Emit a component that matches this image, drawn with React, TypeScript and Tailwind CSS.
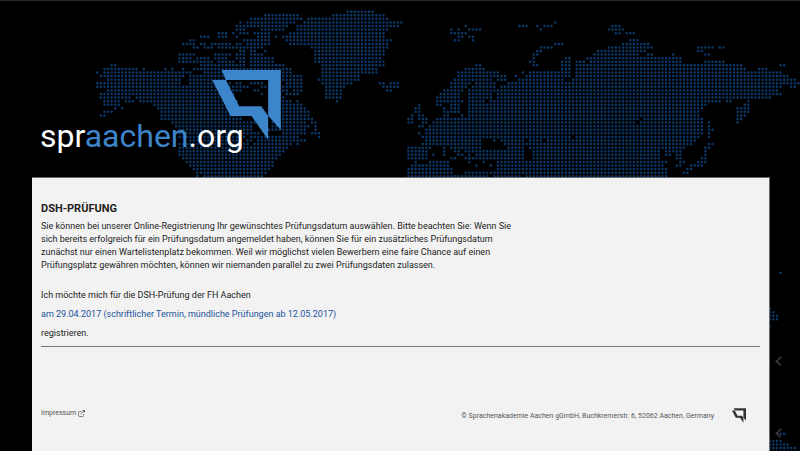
import React from "react";

const PITCH = 3.577;
const ORIGIN_X = 97.3;
const ORIGIN_Y = 10.7;

// Land spans of the dotted world map: row number -> [from, to, from, to, ...]
const LAND: Record<number, number[]> = {
  0: [347, 373],
  1: [265, 298, 333, 384],
  2: [251, 301, 308, 387],
  3: [240, 240, 247, 294, 304, 401, 555, 555],
  4: [237, 247, 251, 287, 297, 396, 465, 465, 519, 527, 537, 537, 544, 552, 612, 619],
  5: [237, 244, 262, 283, 297, 388, 451, 451, 458, 458, 469, 480, 540, 540, 608, 623],
  6: [218, 227, 233, 233, 240, 247, 254, 269, 290, 384, 451, 466, 616, 619, 627, 634],
  7: [200, 209, 218, 227, 237, 237, 258, 269, 276, 276, 283, 384, 458, 462, 469, 473],
  8: [190, 194, 243, 270, 287, 391, 455, 458, 473, 473, 630, 637],
  9: [183, 195, 200, 206, 212, 230, 237, 240, 247, 262, 265, 270, 290, 387, 555, 562, 623, 649],
  10: [194, 198, 204, 213, 218, 230, 234, 240, 243, 262, 312, 387, 540, 552, 608, 652, 698, 712, 719, 723],
  11: [240, 244, 251, 254, 265, 265, 315, 384, 537, 540, 598, 646, 698, 701],
  12: [179, 194, 215, 228, 237, 245, 251, 263, 315, 384, 533, 537, 594, 637, 647, 652, 673, 673, 705, 708],
  13: [179, 187, 190, 190, 197, 207, 215, 225, 237, 244, 251, 273, 315, 380, 533, 533, 565, 570, 587, 680],
  14: [179, 194, 198, 213, 219, 225, 230, 233, 240, 244, 251, 273, 315, 384, 530, 533, 562, 570, 576, 584, 591, 680, 705, 723],
  15: [112, 115, 201, 208, 212, 244, 251, 284, 322, 384, 476, 480, 533, 537, 562, 570, 576, 742, 780, 783],
  16: [104, 137, 144, 144, 166, 166, 173, 173, 183, 183, 194, 204, 208, 290, 322, 377, 465, 484, 562, 570, 576, 745, 758, 766],
  17: [97, 97, 104, 191, 204, 292, 322, 377, 458, 498, 523, 523, 530, 570, 576, 780],
  18: [101, 180, 183, 183, 190, 238, 282, 300, 322, 360, 458, 505, 516, 516, 526, 570, 576, 787],
  19: [108, 180, 190, 227, 282, 302, 318, 360, 455, 491, 498, 505, 519, 563, 573, 795],
  20: [97, 180, 190, 230, 237, 240, 251, 262, 287, 300, 322, 353, 380, 383, 391, 398, 451, 469, 476, 495, 508, 799],
  21: [97, 101, 105, 230, 234, 247, 262, 266, 283, 302, 325, 345, 384, 398, 451, 466, 473, 495, 501, 780, 791, 795],
  22: [108, 234, 237, 240, 255, 258, 283, 287, 294, 302, 325, 342, 387, 391, 444, 463, 469, 495, 498, 777],
  23: [101, 234, 262, 262, 287, 293, 298, 298, 328, 342, 440, 460, 469, 491, 498, 780],
  24: [101, 130, 137, 234, 283, 283, 328, 342, 437, 460, 469, 491, 498, 770],
  25: [104, 119, 126, 133, 140, 237, 283, 292, 298, 298, 337, 337, 437, 462, 469, 480, 483, 483, 490, 719, 727, 730, 748, 748],
  26: [104, 119, 155, 237, 283, 302, 419, 419, 437, 440, 451, 460, 469, 705, 744, 748],
  27: [115, 115, 122, 122, 158, 238, 283, 305, 416, 419, 444, 444, 451, 459, 469, 701, 737, 748],
  28: [104, 112, 162, 240, 283, 308, 416, 419, 444, 459, 469, 698, 737, 748],
  29: [101, 104, 162, 240, 283, 308, 412, 412, 419, 423, 444, 448, 462, 462, 469, 698, 737, 744],
  30: [162, 240, 283, 312, 408, 412, 419, 426, 437, 637, 644, 701, 737, 740],
  31: [173, 255, 272, 305, 312, 315, 408, 412, 423, 426, 433, 634, 640, 701, 708, 708, 737, 737],
  32: [177, 252, 272, 308, 315, 315, 419, 423, 430, 701, 708, 708],
  33: [179, 252, 269, 304, 315, 315, 426, 701, 708, 712],
  34: [179, 258, 283, 304, 312, 318, 419, 419, 426, 701, 708, 708],
  35: [179, 244, 251, 297, 319, 319, 423, 500, 505, 570, 576, 698, 708, 708],
  36: [190, 240, 247, 251, 258, 300, 304, 304, 426, 480, 494, 494, 501, 501, 505, 522, 530, 540, 548, 694],
  37: [179, 247, 254, 290, 298, 298, 423, 444, 448, 451, 455, 480, 505, 522, 526, 690, 708, 712],
  38: [179, 244, 247, 287, 408, 430, 444, 444, 451, 455, 460, 480, 508, 522, 530, 683, 705, 708],
  39: [179, 283, 408, 427, 444, 444, 455, 460, 465, 522, 533, 660, 665, 665, 669, 680, 705, 705],
  40: [179, 280, 408, 427, 433, 433, 444, 444, 458, 462, 469, 469, 476, 476, 480, 523, 532, 660, 665, 669, 676, 680, 705, 705],
  41: [183, 277, 408, 427, 451, 455, 466, 473, 476, 523, 532, 658, 676, 680, 701, 705],
  42: [187, 273, 416, 416, 430, 447, 469, 469, 483, 483, 498, 665, 680, 683, 698, 705],
  43: [190, 273, 412, 447, 476, 476, 490, 490, 498, 662, 676, 680, 690, 701],
  44: [194, 270, 408, 451, 498, 667, 687, 690],
  45: [198, 267, 408, 453, 465, 667, 683, 687],
  46: [198, 198, 204, 263, 408, 487, 494, 520, 526, 667],
  73: [780, 780],
  83: [770, 770],
  84: [770, 773],
  85: [770, 777],
  86: [770, 777],
  88: [770, 770],
  118: [780, 784],
  120: [770, 781],
  121: [770, 788],
  122: [770, 795],
  123: [770, 799],
};

function buildDots(): string {
  let d = "";
  for (const [row, spans] of Object.entries(LAND)) {
    const y = (ORIGIN_Y + Number(row) * PITCH).toFixed(2);
    for (let i = 0; i < spans.length; i += 2) {
      const from = Math.round((spans[i] - ORIGIN_X) / PITCH);
      const to = Math.round((spans[i + 1] - ORIGIN_X) / PITCH);
      for (let c = from; c <= to; c++) {
        d += `M${(ORIGIN_X + c * PITCH).toFixed(2)} ${y}h0`;
      }
    }
  }
  return d;
}

const DOTS = buildDots();

function WorldMap() {
  return (
    <svg className="absolute inset-0 h-full w-full" aria-hidden="true">
      <path d={DOTS} fill="none" stroke="#0a3a6c" strokeWidth="2.5" strokeLinecap="round" />
      <g fill="none" stroke="#4a4a4a" strokeWidth="1.8" strokeDasharray="1.6 0.8">
        <path d="M781 356l-4.500 4.500l4.500 4" />
        <path d="M781 428l-4.500 4.500l4.500 4" />
      </g>
    </svg>
  );
}

function Mark({ className }: { className: string }) {
  return (
    <svg viewBox="0 0 206 210" className={className} fill="currentColor" aria-hidden="true">
      <path d="M28 0H206V180L168 137V30H41Z" />
      <path d="M0 30H41L81 109H147L168 137V210L118 138H55Z" />
    </svg>
  );
}

export default function App() {
  return (
    <div className="relative flex min-h-screen flex-col overflow-hidden border-t border-[#232c33] bg-black font-['Roboto','Liberation_Sans',sans-serif] text-[9px] leading-[13px] text-[#222]">
      <WorldMap />
      <header className="relative h-44 pt-[69px] pl-10">
        <a href="#home" className="block w-[241px]" aria-label="spraachen.org">
          <Mark className="ml-auto h-[70px] w-[69px] text-[#3d85cb]" />
          <span className="-mt-6 block text-[32px] leading-[40px] text-white">
            spr<span className="text-[#3d85cb]">aachen</span>.org
          </span>
        </a>
      </header>

      <div className="relative mr-[30px] ml-8 flex flex-1 flex-col border-t border-r border-[#6b6b6b] bg-[#f2f2f2] px-[9px]">
        <main className="border-b border-[#777] pt-6 pb-1.5">
          <h1 className="text-[11px] leading-[14px] font-bold">DSH-PRÜFUNG</h1>
          <p className="mt-1 max-w-[480px]">
            Sie können bei unserer Online-Registrierung Ihr gewünschtes Prüfungsdatum auswählen. Bitte beachten Sie: Wenn Sie
            sich bereits erfolgreich für ein Prüfungsdatum angemeldet haben, können Sie für ein zusätzliches Prüfungsdatum
            zunächst nur einen Wartelistenplatz bekommen. Weil wir möglichst vielen Bewerbern eine faire Chance auf einen
            Prüfungsplatz gewähren möchten, können wir niemanden parallel zu zwei Prüfungsdaten zulassen.
          </p>
          <p className="mt-[17px]">Ich möchte mich für die DSH-Prüfung der FH Aachen</p>
          <p className="mt-1.5">
            <a href="#termin" className="text-[#1c539c]">
              am 29.04.2017 (schriftlicher Termin, mündliche Prüfungen ab 12.05.2017)
            </a>
          </p>
          <p className="mt-1.5">registrieren.</p>
        </main>

        <footer className="flex items-start justify-between pt-[60px] pr-3.5 pb-7 text-[7px] leading-[12px] text-[#555]">
          <a href="#impressum" className="flex items-center gap-0.5">
            Impressum
            <svg viewBox="0 0 14 14" className="h-[7px] w-[7px]" fill="none" stroke="currentColor" strokeWidth="1.500" aria-hidden="true">
              <path d="M7 3H3Q1 3 1 5V11Q1 13 3 13H9Q11 13 11 11V8M5.500 8.500L12 2" />
              <path d="M8.500 0H14V5.500Z" fill="currentColor" stroke="none" />
            </svg>
          </a>
          <div className="mt-px flex items-center gap-[18px]">
            <span>© Sprachenakademie Aachen gGmbH, Buchkremerstr. 6, 52062 Aachen, Germany</span>
            <Mark className="h-[15px] w-[14px] text-[#333]" />
          </div>
        </footer>
      </div>
    </div>
  );
}
